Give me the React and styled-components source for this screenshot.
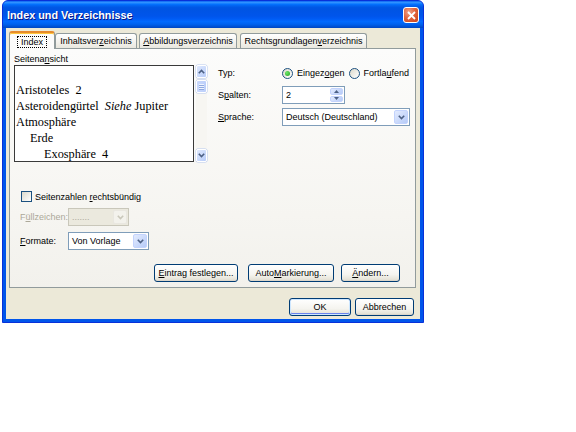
import React from "react";
import styled, { createGlobalStyle, css } from "styled-components";

const GlobalStyle = createGlobalStyle`
  html, body {
    margin: 0;
    padding: 0;
    background: #ffffff;
  }
  body {
    font-family: "Liberation Sans", Arial, sans-serif;
    font-size: 9px;
    color: #000;
  }
`;

const Chevron = ({ color = "#4d6185", up }) => (
  <svg width="7" height="5" viewBox="0 0 7 5">
    <path
      d={up ? "M0.8 4.2 L3.5 1.4 L6.2 4.2" : "M0.8 0.8 L3.5 3.6 L6.2 0.8"}
      fill="none"
      stroke={color}
      strokeWidth="1.6"
    />
  </svg>
);

const SmallArrow = ({ up }) => (
  <svg width="5" height="3" viewBox="0 0 5 3">
    <path d={up ? "M0 3 L2.5 0 L5 3 Z" : "M0 0 L2.5 3 L5 0 Z"} fill="#4d6185" />
  </svg>
);

function App() {
  return (
    <>
      <GlobalStyle />
      <Window>
        <TitleBar>
          <TitleText>Index und Verzeichnisse</TitleText>
          <CloseButton>
            <svg width="9" height="9" viewBox="0 0 9 9">
              <path d="M1 1 L8 8 M8 1 L1 8" stroke="#fff" strokeWidth="1.8" />
            </svg>
          </CloseButton>
        </TitleBar>
        <Client>
          <TabBar>
            <Tab $w={46} $active>
              <Focus>Index</Focus>
            </Tab>
            <Tab $w={82}>
              <span>
                Inhaltsver<u>z</u>eichnis
              </span>
            </Tab>
            <Tab $w={98} $ml={2}>
              <span>
                <u>A</u>bbildungsverzeichnis
              </span>
            </Tab>
            <Tab $w={127} $ml={3}>
              <span>
                Rechtsgrundlagen<u>v</u>erzeichnis
              </span>
            </Tab>
          </TabBar>
          <Panel>
            <TopSection>
              <LeftCol>
                <SmallLabel>
                  Seitena<u>n</u>sicht
                </SmallLabel>
                <PreviewRow>
                  <PreviewBox>
                    <Entry>{"Aristoteles  2"}</Entry>
                    <Entry>
                      {"Asteroidengürtel  "}
                      <i>Siehe</i>
                      {" Jupiter"}
                    </Entry>
                    <Entry>Atmosphäre</Entry>
                    <Entry $level={1}>Erde</Entry>
                    <Entry $level={2}>{"Exosphäre  4"}</Entry>
                  </PreviewBox>
                  <ScrollBar>
                    <ScrollButton>
                      <Chevron up />
                    </ScrollButton>
                    <ScrollThumb>
                      <Grip />
                      <Grip />
                      <Grip />
                    </ScrollThumb>
                    <ScrollTrack />
                    <ScrollButton>
                      <Chevron />
                    </ScrollButton>
                  </ScrollBar>
                </PreviewRow>
              </LeftCol>
              <OptionGrid>
                <FieldLabel>Typ:</FieldLabel>
                <RadioGroup>
                  <RadioItem>
                    <Radio $checked />
                    <span>
                      Eingez<u>o</u>gen
                    </span>
                  </RadioItem>
                  <RadioItem>
                    <Radio />
                    <span>
                      Fortla<u>u</u>fend
                    </span>
                  </RadioItem>
                </RadioGroup>
                <FieldLabel>
                  S<u>p</u>alten:
                </FieldLabel>
                <Field $w={63}>
                  <FieldValue>2</FieldValue>
                  <Spin>
                    <SpinHalf>
                      <SmallArrow up />
                    </SpinHalf>
                    <SpinHalf>
                      <SmallArrow />
                    </SpinHalf>
                  </Spin>
                </Field>
                <FieldLabel>
                  <u>S</u>prache:
                </FieldLabel>
                <Field $w={128}>
                  <FieldValue>Deutsch (Deutschland)</FieldValue>
                  <DropButton>
                    <Chevron />
                  </DropButton>
                </Field>
              </OptionGrid>
            </TopSection>
            <LowerSection>
              <CheckRow>
                <CheckBox />
                <span>
                  Seitenzahlen <u>r</u>echtsbündig
                </span>
              </CheckRow>
              <FormRow $mt={5}>
                <RowLabel $disabled>
                  F<u>ü</u>llzeichen:
                </RowLabel>
                <Field $w={61} $disabled>
                  <FieldValue $disabled>.......</FieldValue>
                  <DropButton $disabled>
                    <Chevron color="#c9c7ba" />
                  </DropButton>
                </Field>
              </FormRow>
              <FormRow $mt={6}>
                <RowLabel>
                  <u>F</u>ormate:
                </RowLabel>
                <Field $w={81}>
                  <FieldValue>Von Vorlage</FieldValue>
                  <DropButton>
                    <Chevron />
                  </DropButton>
                </Field>
              </FormRow>
            </LowerSection>
            <PanelButtons>
              <Button $w={84}>
                <span>
                  <u>E</u>intrag festlegen...
                </span>
              </Button>
              <Button $w={86} $ml={10}>
                <span>
                  Auto<u>M</u>arkierung...
                </span>
              </Button>
              <Button $w={59} $ml={7}>
                <span>
                  <u>Ä</u>ndern...
                </span>
              </Button>
            </PanelButtons>
          </Panel>
          <Footer>
            <Button $w={62} $default>
              OK
            </Button>
            <Button $w={59} $ml={4}>
              Abbrechen
            </Button>
          </Footer>
        </Client>
      </Window>
    </>
  );
}

const Window = styled.div`
  box-sizing: border-box;
  width: 422px;
  height: 323px;
  margin-left: 2px;
  display: flex;
  flex-direction: column;
  background: #0055ea;
  border: 1px solid #0831d9;
  border-radius: 6px 6px 0 0;
  padding: 0 3px 3px;
`;

const TitleBar = styled.div`
  height: 27px;
  margin: 0 -3px;
  padding: 0 4px 0 4px;
  display: flex;
  align-items: center;
  justify-content: space-between;
  border-radius: 5px 5px 0 0;
  background: linear-gradient(
    to bottom,
    #0058ee 0%,
    #3593ff 4%,
    #288eff 7%,
    #127dff 10%,
    #036ffc 13%,
    #0262ee 18%,
    #0057e5 24%,
    #0054e3 30%,
    #0055eb 56%,
    #005bf5 66%,
    #026afe 76%,
    #0062ef 86%,
    #0052d6 94%,
    #0046c0 100%
  );
`;

const TitleText = styled.span`
  font-family: "Liberation Sans", Arial, sans-serif;
  font-weight: bold;
  font-size: 10.8px;
  color: #ffffff;
  text-shadow: 1px 1px 0 #0a1883;
`;

const CloseButton = styled.div`
  box-sizing: border-box;
  width: 16px;
  height: 16px;
  margin-top: 1px;
  border: 1px solid #ffffff;
  border-radius: 3px;
  background: radial-gradient(
    circle at 35% 30%,
    #f0a58c 0%,
    #e2663f 45%,
    #c84218 100%
  );
  display: flex;
  align-items: center;
  justify-content: center;
`;

const Client = styled.div`
  flex: 1;
  background: #ece9d8;
  padding: 3px 4px 0 3px;
`;

const TabBar = styled.div`
  display: flex;
  align-items: flex-end;
  height: 17px;
`;

const Tab = styled.div`
  box-sizing: border-box;
  width: ${(p) => p.$w}px;
  height: 15px;
  margin-left: ${(p) => p.$ml || 0}px;
  border: 1px solid #919b9c;
  border-bottom: none;
  border-radius: 3px 3px 0 0;
  background: linear-gradient(#ffffff, #f3f2ed 60%, #e9e7df);
  display: flex;
  align-items: center;
  justify-content: center;
  white-space: nowrap;
  ${(p) =>
    p.$active &&
    css`
      height: 18px;
      margin-bottom: -1px;
      position: relative;
      z-index: 1;
      border-top: 2px solid #e68b2c;
      box-shadow: inset 0 1px 0 #ffc73c;
      background: #fcfcfb;
      padding-top: 1px;
    `}
`;

const Focus = styled.span`
  border: 1px dotted #000;
  padding: 0 3px;
  line-height: 10px;
`;

const Panel = styled.div`
  box-sizing: border-box;
  width: 407px;
  height: 240px;
  border: 1px solid #919b9c;
  background: linear-gradient(#fcfcfb, #f6f5f1 70%, #f2f1ec);
  display: flex;
  flex-direction: column;
`;

const TopSection = styled.div`
  display: flex;
  align-items: flex-start;
  padding-left: 4px;
`;

const LeftCol = styled.div`
  padding-top: 5px;
`;

const SmallLabel = styled.div`
  height: 11px;
  line-height: 11px;
`;

const PreviewRow = styled.div`
  display: flex;
  gap: 2px;
`;

const PreviewBox = styled.div`
  box-sizing: border-box;
  width: 180px;
  height: 97px;
  border: 1px solid #3a3a3a;
  background: #ffffff;
  padding: 16px 0 0 1px;
  overflow: hidden;
`;

const Entry = styled.div`
  font-family: "Liberation Serif", "Times New Roman", serif;
  font-size: 12.3px;
  line-height: 16px;
  white-space: pre;
  padding-left: ${(p) => (p.$level || 0) * 14}px;
`;

const ScrollBar = styled.div`
  width: 11px;
  height: 97px;
  display: flex;
  flex-direction: column;
  background: #f7f6f2;
`;

const ScrollButton = styled.div`
  box-sizing: border-box;
  height: 13px;
  border: 1px solid #ffffff;
  border-radius: 2px;
  background: linear-gradient(135deg, #dfe9fe, #b9cdf9);
  box-shadow: 0 0 0 0.5px #b5c7ee;
  display: flex;
  align-items: center;
  justify-content: center;
`;

const ScrollThumb = styled(ScrollButton)`
  margin-top: 2px;
  flex-direction: column;
  gap: 1px;
  background: linear-gradient(90deg, #c9d8fc, #bccffa);
`;

const Grip = styled.div`
  width: 5px;
  height: 1px;
  background: #eef3fe;
  box-shadow: 0 1px 0 #8fa9e0;
`;

const ScrollTrack = styled.div`
  flex: 1;
`;

const OptionGrid = styled.div`
  margin-left: 11px;
  padding-top: 15px;
  display: grid;
  grid-template-columns: 64px auto;
  grid-auto-rows: 18px;
  row-gap: 4px;
  align-items: center;
`;

const FieldLabel = styled.div`
  line-height: 11px;
`;

const RadioGroup = styled.div`
  display: flex;
  align-items: center;
  gap: 4px;
`;

const RadioItem = styled.label`
  display: flex;
  align-items: center;
  gap: 4px;
  white-space: nowrap;
`;

const Radio = styled.span`
  box-sizing: border-box;
  width: 11px;
  height: 11px;
  border-radius: 50%;
  border: 1px solid #1c5180;
  background: linear-gradient(135deg, #dcd9cb, #ffffff);
  display: flex;
  align-items: center;
  justify-content: center;
  ${(p) =>
    p.$checked &&
    css`
      &::after {
        content: "";
        width: 5px;
        height: 5px;
        border-radius: 50%;
        background: radial-gradient(circle at 35% 35%, #6ee86a, #21a121);
      }
    `}
`;

const Field = styled.div`
  box-sizing: border-box;
  width: ${(p) => p.$w}px;
  height: 18px;
  border: 1px solid ${(p) => (p.$disabled ? "#c9c7ba" : "#7f9db9")};
  background: ${(p) => (p.$disabled ? "#ebe9de" : "#ffffff")};
  display: flex;
  align-items: stretch;
  padding: 1px;
`;

const FieldValue = styled.div`
  flex: 1;
  display: flex;
  align-items: center;
  padding-left: 2px;
  white-space: nowrap;
  overflow: hidden;
  color: ${(p) => (p.$disabled ? "#aca899" : "#000")};
`;

const DropButton = styled.div`
  box-sizing: border-box;
  width: 14px;
  border: 1px solid ${(p) => (p.$disabled ? "#e9e7e0" : "#c3d3fd")};
  border-radius: 2px;
  background: ${(p) =>
    p.$disabled
      ? "#f3f2ec"
      : "linear-gradient(135deg, #e3ebfe, #b6cbf8)"};
  display: flex;
  align-items: center;
  justify-content: center;
`;

const Spin = styled.div`
  width: 13px;
  display: flex;
  flex-direction: column;
  gap: 1px;
`;

const SpinHalf = styled(DropButton)`
  width: 13px;
  flex: 1;
`;

const LowerSection = styled.div`
  margin-top: 28px;
  padding-left: 10px;
`;

const CheckRow = styled.label`
  display: flex;
  align-items: center;
  gap: 3px;
  height: 13px;
  padding-left: 1px;
`;

const CheckBox = styled.span`
  box-sizing: border-box;
  width: 11px;
  height: 11px;
  border: 1px solid #1c5180;
  background: linear-gradient(135deg, #dcd9cb, #ffffff);
`;

const FormRow = styled.div`
  display: flex;
  align-items: center;
  margin-top: ${(p) => p.$mt}px;
`;

const RowLabel = styled.div`
  width: 48px;
  color: ${(p) => (p.$disabled ? "#aca899" : "#000")};
`;

const PanelButtons = styled.div`
  margin-top: 14px;
  padding-right: 15px;
  display: flex;
  justify-content: flex-end;
`;

const Button = styled.div`
  box-sizing: border-box;
  width: ${(p) => p.$w}px;
  height: 18px;
  margin-left: ${(p) => p.$ml || 0}px;
  border: 1px solid #003c74;
  border-radius: 3px;
  background: linear-gradient(#ffffff, #f5f4ef 60%, #e6e3d8 90%, #d6d0c5);
  display: flex;
  align-items: center;
  justify-content: center;
  white-space: nowrap;
  ${(p) =>
    p.$default &&
    css`
      box-shadow: inset 0 0 0 1px #cee7ff, inset 0 -1px 0 1px #6982ee;
    `}
`;

const Footer = styled.div`
  margin-top: 10px;
  padding-right: 2px;
  display: flex;
  justify-content: flex-end;
`;

export default App;
